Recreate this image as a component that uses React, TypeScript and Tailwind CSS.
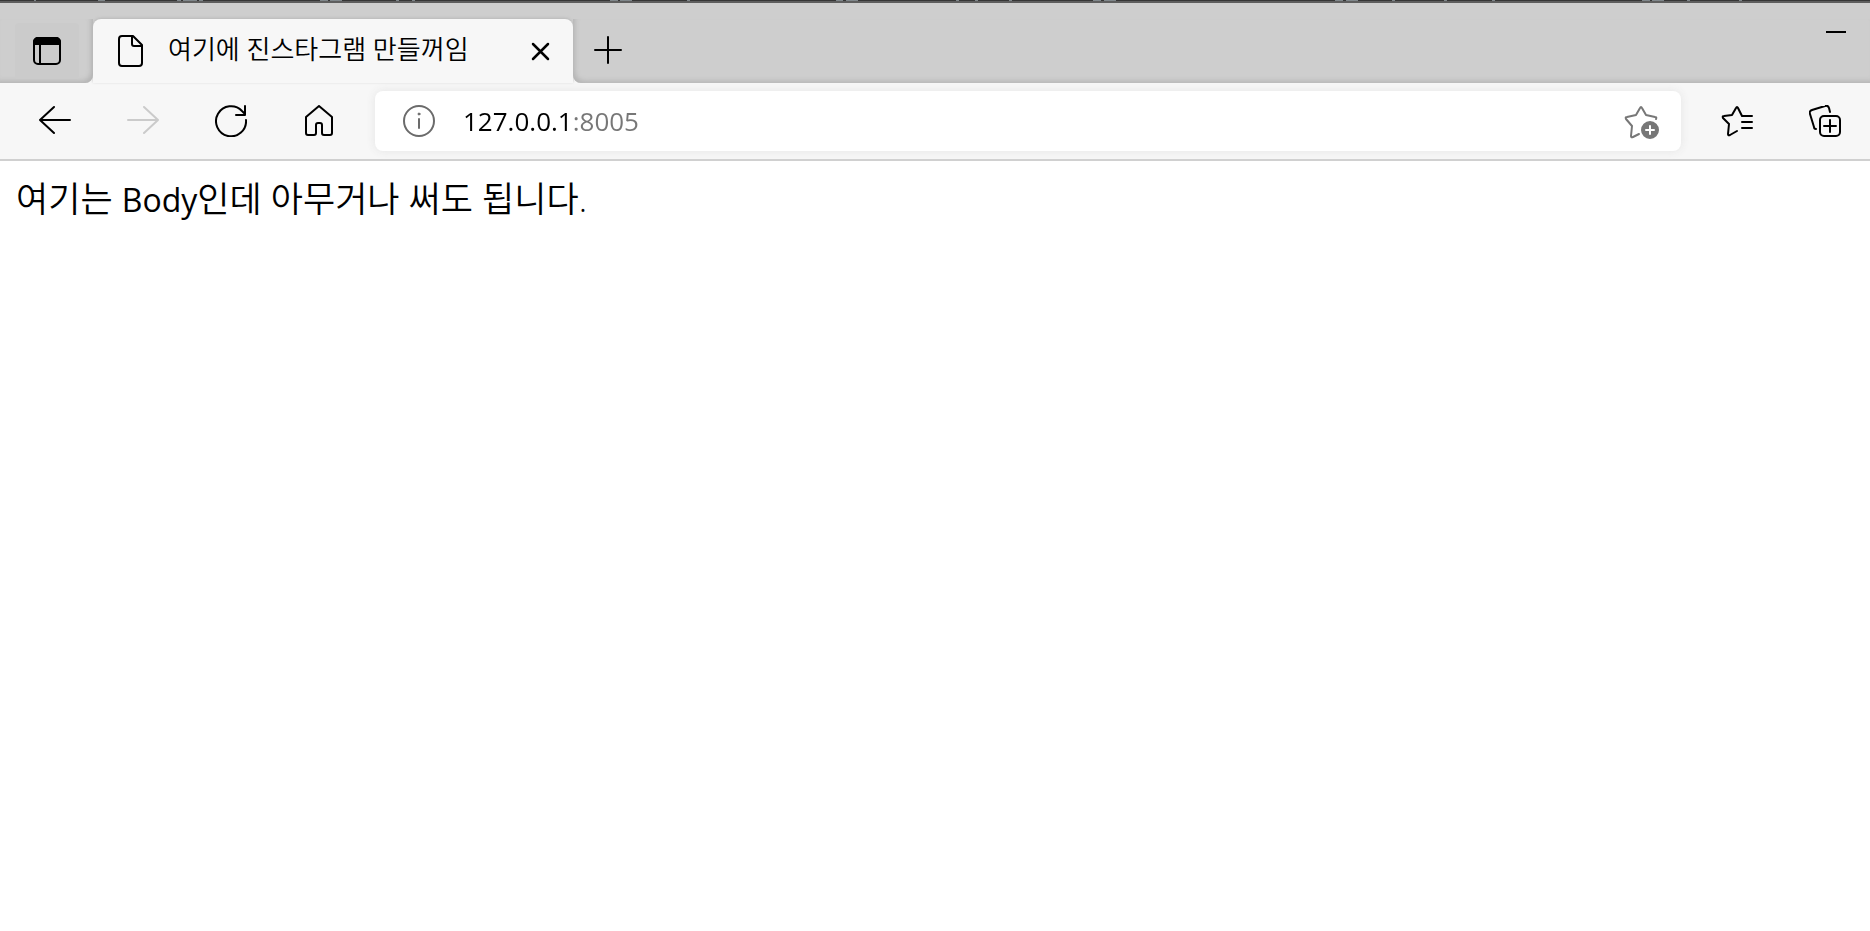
import type { ReactNode } from 'react';

const MARKS = [
  [34, 2], [98, 7], [177, 4], [183, 14], [199, 4], [320, 8], [330, 12], [396, 3], [412, 3],
  [610, 8], [620, 12], [687, 3], [836, 7], [846, 12], [956, 3], [975, 3], [1009, 3],
  [1093, 8], [1104, 12], [1335, 8], [1346, 12], [1392, 3], [1444, 3], [1492, 3],
  [1642, 8], [1652, 12], [1687, 3], [1739, 3],
];

function Icon({ children }: { children: ReactNode }) {
  return (
    <svg className="size-8 shrink-0" viewBox="0 0 32 32" fill="none" stroke="currentColor" strokeWidth={2} strokeLinecap="round" strokeLinejoin="round">
      {children}
    </svg>
  );
}

function ToolButton({ label, disabled, children }: { label: string; disabled?: boolean; children: ReactNode }) {
  return (
    <button aria-label={label} disabled={disabled} className="flex h-15 w-22 shrink-0 items-center justify-center text-black disabled:text-[#cbcbcb]">
      <Icon>{children}</Icon>
    </button>
  );
}

function TabStrip() {
  return (
    <div className="bg-[#f7f7f7]">
      <div className="h-4 bg-[#cecece]"></div>
      <div className="flex h-16">
        {/* Tab actions */}
        <div className="w-[93px] shrink-0 rounded-br-lg bg-[#cecece] pt-1 pl-[15px] shadow-[inset_-3px_-3px_5px_-1px_#b4b4b4]">
          <button aria-label="Tab actions" className="flex h-14 w-16 items-center justify-center rounded-sm bg-[#cbcbcb]">
            <Icon>
              <rect x="3" y="3" width="26" height="26" rx="4" />
              <path d="M3 9V7a4 4 0 0 1 4-4h18a4 4 0 0 1 4 4v2z" fill="currentColor" />
              <path d="M9 9v20" />
            </Icon>
          </button>
        </div>

        {/* Active tab */}
        <div className="w-[480px] shrink-0 bg-[#cecece]">
          <div className="flex h-16 items-center rounded-t-lg bg-[#f7f7f7] pr-[17px] pl-[22px] shadow-[0_-1px_3px_#b8b8b8]">
            <Icon>
              <path d="M8 1h10l9 9v18a3 3 0 0 1-3 3H7a3 3 0 0 1-3-3V4a3 3 0 0 1 3-3z" />
              <path d="M17 1v8a2 2 0 0 0 2 2h8" />
            </Icon>
            <span className="ml-[21px] flex-1 pb-1 text-[26px] leading-9 font-[350] whitespace-nowrap">여기에 진스타그램 만들꺼임</span>
            <button aria-label="Close tab" className="flex size-8 items-center justify-center">
              <Icon>
                <path d="M9 9l15 15M24 9L9 24" strokeWidth={2.5} />
              </Icon>
            </button>
          </div>
        </div>

        <div className="flex flex-1 justify-between rounded-bl-lg bg-[#cecece] pr-3.5 pl-[19px] shadow-[inset_3px_-3px_5px_-1px_#b4b4b4]">
          <button aria-label="New tab" className="flex h-15 items-center">
            <Icon>
              <path d="M3 17h26M16 4v26" />
            </Icon>
          </button>
          <button aria-label="Minimize" className="flex h-6.5 w-10 items-center justify-center">
            <span className="h-0.5 w-5 bg-black"></span>
          </button>
        </div>
      </div>
    </div>
  );
}

function Toolbar() {
  return (
    <div className="flex h-[78px] items-center border-b-2 border-[#d0d0d0] bg-[#f7f7f7] pr-px pl-[11px]">
      <ToolButton label="Back">
        <path d="M31 15H1M15 2L1 15l14 13" />
      </ToolButton>
      <ToolButton label="Forward" disabled>
        <path d="M1 15h30M17 2l14 13-14 13" />
      </ToolButton>
      <ToolButton label="Refresh">
        <path d="M31 15a15 15 0 1 1-4-9l3 3M30 1v9h-9" />
      </ToolButton>
      <ToolButton label="Home">
        <path d="M16 1l13 11v16a2 2 0 0 1-2 2h-6a2 2 0 0 1-2-2v-8a2 2 0 0 0-2-2h-2a2 2 0 0 0-2 2v8a2 2 0 0 1-2 2H5a2 2 0 0 1-2-2V12z" />
      </ToolButton>

      <div className="mx-3 flex h-15 flex-1 items-center rounded-lg bg-white pr-[21px] pl-7 text-[#6b6b6b] shadow-[0_0_10px_#e4e4e4]">
        <Icon>
          <circle cx="16" cy="16" r="15" />
          <path d="M16 14v9" />
          <circle cx="16" cy="9" r="1" fill="currentColor" strokeWidth={1} />
        </Icon>
        <input
          aria-label="Address"
          defaultValue="127.0.0.1:8005"
          className="ml-7 min-w-0 flex-1 bg-[linear-gradient(to_right,#000_108px,#777_108px)] bg-clip-text text-[26px] text-transparent outline-none"
        />
        <button aria-label="Add to favorites" className="flex h-15 items-center text-[#777]">
          <svg className="size-9" viewBox="0 0 36 36" fill="none" stroke="currentColor" strokeWidth={2} strokeLinecap="round" strokeLinejoin="round">
            <path d="M15 31l-6 3q-2 1-2-1l1-10-6-7q-1-2 1-2l9-2 4-7q1-2 2 0l4 7 9 2q2 0 1 2" />
            <circle cx="26" cy="27" r="8" fill="currentColor" />
            <path d="M26 23v8M22 27h8" stroke="#fff" />
          </svg>
        </button>
      </div>

      <ToolButton label="Favorites">
        <path d="M16 26l-7 4q-2 1-2-1l1-10-6-6q-1-2 1-2l8-1 4-7q1-2 2 0l4 8h10M21 17h10M21 23h10" />
      </ToolButton>
      <ToolButton label="Collections">
        <rect x="11" y="11" width="20" height="20" rx="4" />
        <path d="M21 15v12M15 21h12M7 24q-2 0-2-2L1 9q-1-3 2-4l13-4q3-1 4 2l1 4" />
      </ToolButton>
    </div>
  );
}

export default function App() {
  return (
    <div className="min-h-screen bg-white font-['Open_Sans','Noto_Sans_CJK_KR',sans-serif] text-black">
      {/* Edge of the window behind */}
      <svg className="block h-[3px] w-full bg-[#5e5e5e]" shapeRendering="crispEdges">
        <rect width="100%" height="1" fill="#363636" />
        {MARKS.map(([x, width]) => (
          <rect key={x} x={x} width={width} height="1" fill="#7f868a" />
        ))}
      </svg>
      <TabStrip />
      <Toolbar />
      <main className="px-4 pt-3">
        <p className="text-[35px] leading-[52px] font-[350]">
          여기는 <span className="text-[32px] font-normal">Body</span>인데 아무거나 써도 됩니다.
        </p>
      </main>
    </div>
  );
}
